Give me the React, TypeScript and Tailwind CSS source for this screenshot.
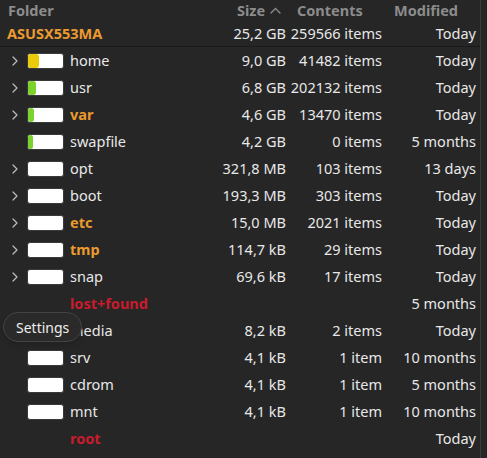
import { useState } from "react";

type Row = {
  name: string;
  size: string;
  contents: string;
  modified: string;
  tone?: "orange" | "red";
  expandable?: boolean;
  bar?: boolean;
  fill?: { color: string; width: number };
};

const rows: Row[] = [
  { name: "home", size: "9,0 GB", contents: "41482 items", modified: "Today", expandable: true, bar: true, fill: { color: "#e9cb0a", width: 11 } },
  { name: "usr", size: "6,8 GB", contents: "202132 items", modified: "Today", expandable: true, bar: true, fill: { color: "#7ad22d", width: 8 } },
  { name: "var", size: "4,6 GB", contents: "13470 items", modified: "Today", tone: "orange", expandable: true, bar: true, fill: { color: "#7ad22d", width: 6 } },
  { name: "swapfile", size: "4,2 GB", contents: "0 items", modified: "5 months", bar: true, fill: { color: "#7ad22d", width: 5 } },
  { name: "opt", size: "321,8 MB", contents: "103 items", modified: "13 days", expandable: true, bar: true },
  { name: "boot", size: "193,3 MB", contents: "303 items", modified: "Today", expandable: true, bar: true },
  { name: "etc", size: "15,0 MB", contents: "2021 items", modified: "Today", tone: "orange", expandable: true, bar: true },
  { name: "tmp", size: "114,7 kB", contents: "29 items", modified: "Today", tone: "orange", expandable: true, bar: true },
  { name: "snap", size: "69,6 kB", contents: "17 items", modified: "Today", expandable: true, bar: true },
  { name: "lost+found", size: "", contents: "", modified: "5 months", tone: "red" },
  { name: "media", size: "8,2 kB", contents: "2 items", modified: "Today", bar: true },
  { name: "srv", size: "4,1 kB", contents: "1 item", modified: "10 months", bar: true },
  { name: "cdrom", size: "4,1 kB", contents: "1 item", modified: "5 months", bar: true },
  { name: "mnt", size: "4,1 kB", contents: "1 item", modified: "10 months", bar: true },
  { name: "root", size: "", contents: "", modified: "Today", tone: "red" },
];

function Chevron() {
  return (
    <svg width="8" height="12" viewBox="0 0 8 12" fill="none">
      <path d="M2 2l4 4-4 4" stroke="#bdbdbd" strokeWidth="1.2" strokeLinecap="round" strokeLinejoin="round" />
    </svg>
  );
}

function UsageBar({ fill }: { fill?: Row["fill"] }) {
  return (
    <div className="flex h-[16px] w-[37px] overflow-hidden rounded-[3px] border border-[#3a3a3a] bg-white">
      {fill && (
        <div className="h-full rounded-[3px]" style={{ width: fill.width, backgroundColor: fill.color }} />
      )}
    </div>
  );
}

export default function App() {
  const [sortAsc] = useState(true);

  const nameColor = (tone?: Row["tone"]) =>
    tone === "orange"
      ? "font-bold text-[#eb9a2f]"
      : tone === "red"
        ? "font-bold text-[#c81c2e]"
        : "text-[#e8e8e8]";

  return (
    <div
      className="relative h-[458px] w-[487px] overflow-hidden whitespace-nowrap bg-[#262626] text-[14.5px] text-[#e8e8e8]"
      style={{ fontFamily: '"Noto Sans", "Open Sans", sans-serif' }}
    >
      <div className="flex h-full w-[481px] flex-col border-r border-[#3c3c3c]">
        {/* Header */}
        <div className="flex h-[21px] items-center font-bold text-[#8c8c8c]">
          <div className="flex-1 pl-[8px]">Folder</div>
          <div className="flex w-[60px] items-center gap-[5px]">
            <span>Size</span>
            {sortAsc && (
              <svg width="11" height="7" viewBox="0 0 11 7" fill="none">
                <path d="M1 6l4.5-4.5L10 6" stroke="#8c8c8c" strokeWidth="1.3" strokeLinecap="round" />
              </svg>
            )}
          </div>
          <div className="w-[97px]">Contents</div>
          <div className="w-[86px]">Modified</div>
        </div>

        {/* Drive row */}
        <div className="flex h-[26px] items-center border-b border-[#1a1a1a]">
          <div className="flex-1 pl-[7px] font-bold text-[#eb9a2f]">ASUSX553MA</div>
          <div className="w-[70px] text-right">25,2 GB</div>
          <div className="w-[96px] text-right">259566 items</div>
          <div className="w-[98px] pr-[4px] text-right">Today</div>
        </div>

        {rows.map((r) => (
          <div key={r.name} className="flex h-[27px] items-center">
            <div className="flex w-[27px] justify-center pl-[2px]">{r.expandable && <Chevron />}</div>
            <div className="w-[43px]">{r.bar && <UsageBar fill={r.fill} />}</div>
            <div className={`flex-1 ${nameColor(r.tone)}`}>{r.name}</div>
            <div className="w-[70px] text-right">{r.size}</div>
            <div className="w-[96px] text-right">{r.contents}</div>
            <div className="w-[98px] pr-[4px] text-right">{r.modified}</div>
          </div>
        ))}
      </div>

      {/* Tooltip */}
      <div className="absolute left-[3px] top-[312px] flex h-[30px] items-center rounded-full border border-[#444444] bg-[#2a2a2a] px-[12px] text-[14px] text-[#eeeeee] shadow-md">
        Settings
      </div>
    </div>
  );
}
